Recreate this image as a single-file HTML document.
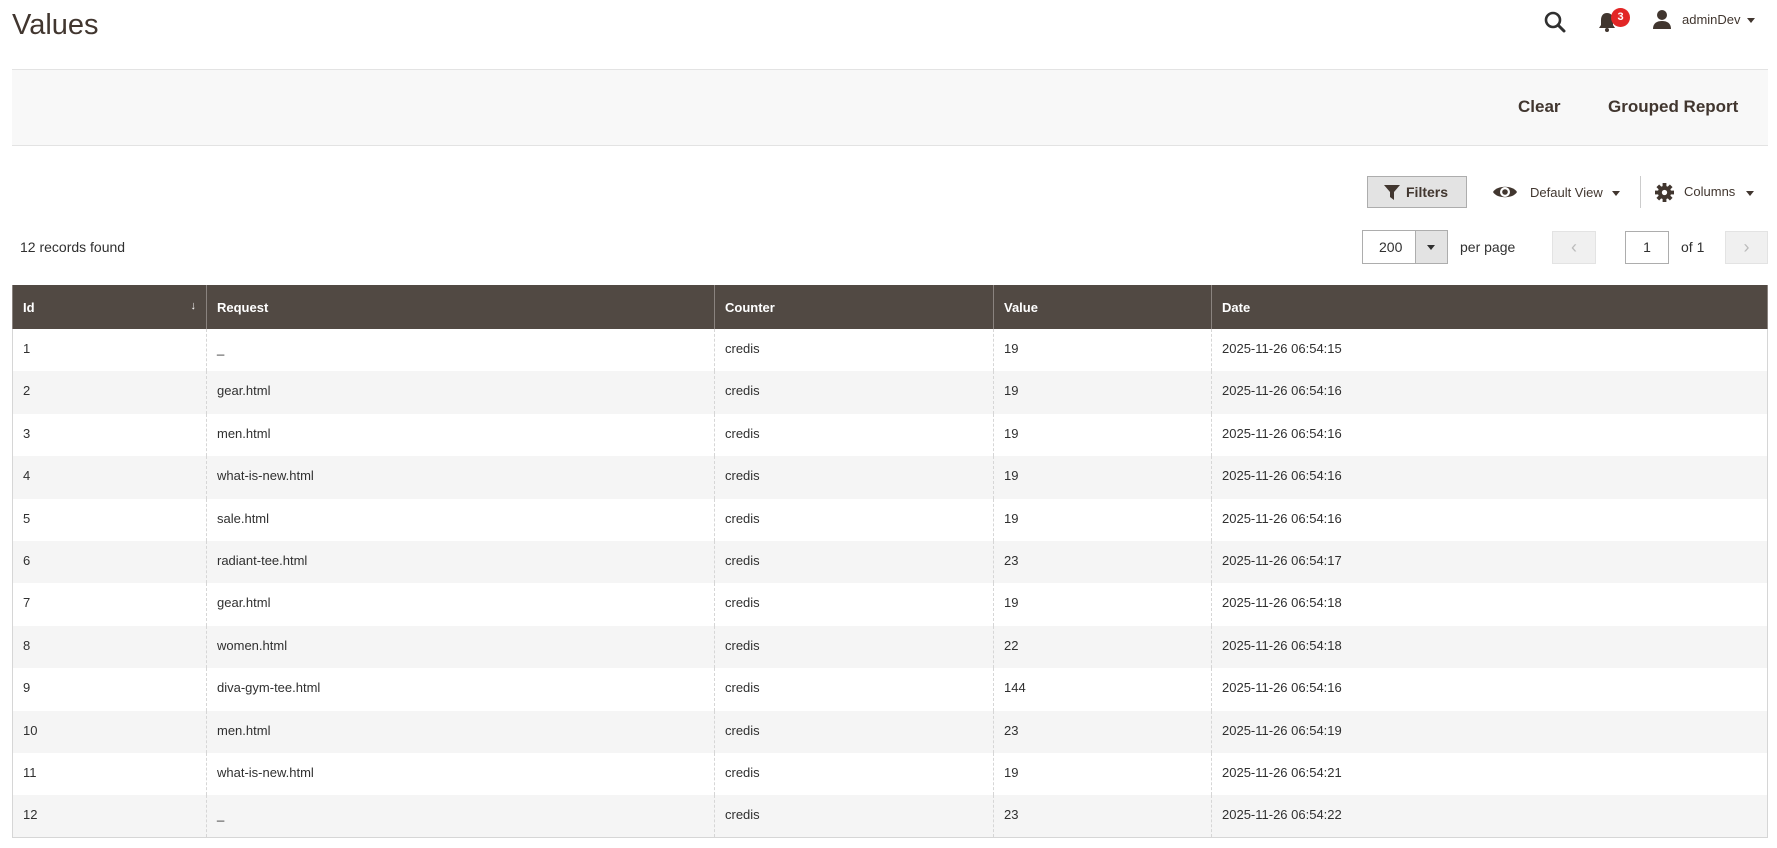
<!DOCTYPE html>
<html><head><meta charset="utf-8"><style>
*{box-sizing:border-box;margin:0;padding:0}
body{width:1777px;height:848px;overflow:hidden;background:#fff;font-family:"Liberation Sans",sans-serif;color:#303030;position:relative}
.a{position:absolute}
.t{font-size:13px;white-space:nowrap}
table{border-collapse:collapse;position:absolute;left:12px;top:285px;width:1756px;font-size:13px}
th{background:#514943;color:#fff;text-align:left;font-weight:bold;height:44px;padding:0 10px;border-left:1px solid #8a837f;border-right:1px solid #8a837f}
td{height:42.4px;padding:0 10px;border-left:1px dashed #d6d6d6;border-right:1px dashed #d6d6d6;vertical-align:top;padding-top:12px}
tr:nth-child(even) td{background:#f5f5f5}
tbody tr td:first-child{border-left:1px solid #d6d6d6}
tbody tr td:last-child{border-right:1px solid #d6d6d6}
tbody tr:last-child td{border-bottom:1px solid #d6d6d6}
</style></head><body>
<div class="a" style="left:12px;top:9px;font-size:29px;color:#41362f">Values</div>
<svg class="a" style="left:1543px;top:10px" width="24" height="24" viewBox="0 0 24 24"><circle cx="10" cy="10" r="7" fill="none" stroke="#303030" stroke-width="2.6"/><path d="M15 15l6 6" stroke="#303030" stroke-width="3" stroke-linecap="round"/></svg>
<svg class="a" style="left:1598px;top:12px" width="18" height="20" viewBox="0 0 18 20"><path d="M9 1c-4 0-6 3-6 7v5l-2 3h16l-2-3V8c0-4-2-7-6-7z" fill="#41362f"/><circle cx="9" cy="18" r="2" fill="#41362f"/></svg>
<div class="a" style="left:1611px;top:8px;width:19px;height:19px;border-radius:50%;background:#e22626;color:#fff;font-size:11px;font-weight:bold;text-align:center;line-height:19px">3</div>
<svg class="a" style="left:1652px;top:9px" width="20" height="20" viewBox="0 0 20 20"><circle cx="10" cy="6" r="5" fill="#41362f"/><path d="M1 20c0-6 4-8 9-8s9 2 9 8z" fill="#41362f"/></svg>
<div class="a t" style="left:1682px;top:12px;color:#41362f">adminDev</div>
<div class="a" style="left:1747px;top:18px;border:4px solid transparent;border-top:5px solid #41362f"></div>
<div class="a" style="left:12px;top:69px;width:1756px;height:77px;background:#f8f8f8;border-top:1px solid #e3e3e3;border-bottom:1px solid #e3e3e3"></div>
<div class="a" style="left:1518px;top:97px;font-size:17px;font-weight:bold;color:#41362f">Clear</div>
<div class="a" style="left:1608px;top:97px;font-size:17px;font-weight:bold;color:#41362f">Grouped Report</div>
<div class="a" style="left:1367px;top:176px;width:100px;height:32px;background:#e3e3e3;border:1px solid #adadad"></div>
<svg class="a" style="left:1384px;top:185px" width="16" height="15" viewBox="0 0 16 15"><path d="M0 0h16L10 7v8l-4-3V7z" fill="#41362f"/></svg>
<div class="a t" style="left:1406px;top:184px;font-weight:bold;font-size:14px;color:#41362f">Filters</div>
<svg class="a" style="left:1493px;top:184px" width="24" height="16" viewBox="0 0 24 16"><path d="M0 8C4 1 20 1 24 8C20 15 4 15 0 8z" fill="#41362f"/><circle cx="12" cy="8" r="5" fill="#fff"/><circle cx="12" cy="8" r="2.8" fill="#41362f"/></svg>
<div class="a t" style="left:1530px;top:185px;color:#41362f">Default View</div>
<div class="a" style="left:1612px;top:191px;border:4px solid transparent;border-top:5px solid #41362f"></div>
<div class="a" style="left:1640px;top:176px;width:1px;height:32px;background:#ccc"></div>
<svg class="a" style="left:1655px;top:183px" width="19" height="19" viewBox="0 0 20 20"><g fill="#41362f"><circle cx="10" cy="10" r="7"/><rect x="8" y="0" width="4" height="20"/><rect x="0" y="8" width="20" height="4"/><rect x="8" y="0" width="4" height="20" transform="rotate(45 10 10)"/><rect x="8" y="0" width="4" height="20" transform="rotate(-45 10 10)"/></g><circle cx="10" cy="10" r="2.8" fill="#fff"/></svg>
<div class="a t" style="left:1684px;top:184px;color:#41362f">Columns</div>
<div class="a" style="left:1746px;top:191px;border:4px solid transparent;border-top:5px solid #41362f"></div>
<div class="a t" style="left:20px;top:239px;font-size:14px">12 records found</div>
<div class="a" style="left:1362px;top:230px;width:86px;height:34px;border:1px solid #adadad;background:#fff"></div>
<div class="a" style="left:1415px;top:231px;width:32px;height:32px;background:#e3e3e3;border-left:1px solid #adadad"></div>
<div class="a" style="left:1427px;top:245px;border:4px solid transparent;border-top:5px solid #303030"></div>
<div class="a t" style="left:1379px;top:239px;font-size:14px">200</div>
<div class="a t" style="left:1460px;top:239px;font-size:14px">per page</div>
<div class="a" style="left:1552px;top:231px;width:44px;height:33px;background:#f0f0f0;border:1px solid #e3e3e3;color:#bbb;text-align:center;line-height:31px;font-size:18px">&#8249;</div>
<div class="a" style="left:1625px;top:231px;width:44px;height:33px;border:1px solid #adadad;text-align:center;line-height:31px;font-size:14px">1</div>
<div class="a t" style="left:1681px;top:239px;font-size:14px">of 1</div>
<div class="a" style="left:1725px;top:231px;width:43px;height:33px;background:#f0f0f0;border:1px solid #e3e3e3;color:#bbb;text-align:center;line-height:31px;font-size:18px">&#8250;</div>
<table>
<colgroup><col style="width:194px"><col style="width:508px"><col style="width:279px"><col style="width:218px"><col></colgroup>
<thead><tr><th>Id<span style="float:right;font-weight:normal;font-size:11px">&#8595;</span></th><th>Request</th><th>Counter</th><th>Value</th><th>Date</th></tr></thead>
<tbody>
<tr><td>1</td><td>_</td><td>credis</td><td>19</td><td>2025-11-26 06:54:15</td></tr>
<tr><td>2</td><td>gear.html</td><td>credis</td><td>19</td><td>2025-11-26 06:54:16</td></tr>
<tr><td>3</td><td>men.html</td><td>credis</td><td>19</td><td>2025-11-26 06:54:16</td></tr>
<tr><td>4</td><td>what-is-new.html</td><td>credis</td><td>19</td><td>2025-11-26 06:54:16</td></tr>
<tr><td>5</td><td>sale.html</td><td>credis</td><td>19</td><td>2025-11-26 06:54:16</td></tr>
<tr><td>6</td><td>radiant-tee.html</td><td>credis</td><td>23</td><td>2025-11-26 06:54:17</td></tr>
<tr><td>7</td><td>gear.html</td><td>credis</td><td>19</td><td>2025-11-26 06:54:18</td></tr>
<tr><td>8</td><td>women.html</td><td>credis</td><td>22</td><td>2025-11-26 06:54:18</td></tr>
<tr><td>9</td><td>diva-gym-tee.html</td><td>credis</td><td>144</td><td>2025-11-26 06:54:16</td></tr>
<tr><td>10</td><td>men.html</td><td>credis</td><td>23</td><td>2025-11-26 06:54:19</td></tr>
<tr><td>11</td><td>what-is-new.html</td><td>credis</td><td>19</td><td>2025-11-26 06:54:21</td></tr>
<tr><td>12</td><td>_</td><td>credis</td><td>23</td><td>2025-11-26 06:54:22</td></tr>
</tbody></table>
</body></html>
